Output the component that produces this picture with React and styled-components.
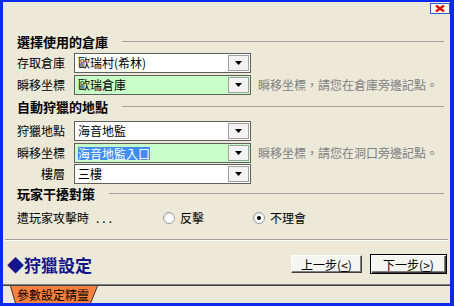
import React from "react";
import styled, { createGlobalStyle, css } from "styled-components";

const GlobalStyle = createGlobalStyle`
  html, body { margin: 0; padding: 0; }
  body {
    width: 454px; height: 306px; overflow: hidden; background: #ece9d8;
    font-family: "Noto Sans CJK TC", "Liberation Sans", sans-serif;
    font-size: 12px; color: #000;
  }
  * { box-sizing: border-box; }
`;

const Frame = styled.div`
  position: relative;
  width: 454px;
  height: 306px;
  border-style: solid;
  border-color: #0a2bea;
  border-width: 2px 4px 3px 3px;
  background: #ece9d8;
  display: flex;
  flex-direction: column;
`;

const CloseButton = styled.button`
  position: absolute;
  top: 1px;
  right: 0;
  width: 20px;
  height: 11px;
  padding: 0;
  border: 1px solid #3458d0;
  background: #fffcec;
  display: flex;
  align-items: center;
  justify-content: center;
`;

const Form = styled.div`
  padding: 33px 6px 0 14px;
  display: flex;
  flex-direction: column;
`;

const SectionHeader = styled.div`
  display: flex;
  align-items: center;
  gap: 14px;
  height: 13px;
  margin-top: ${(p) => p.$mt || 0}px;
  font-weight: bold;
  font-size: 13px;
  line-height: 13px;
  white-space: nowrap;
  &::after {
    content: "";
    flex: 1;
    height: 1px;
    background: #a0a0a0;
  }
`;

const Row = styled.div`
  display: flex;
  align-items: center;
  height: 20px;
  margin-top: ${(p) => p.$mt || 0}px;
  white-space: nowrap;
`;

const Label = styled.span`
  width: 48px;
  margin-right: 9px;
  text-align: right;
  line-height: 12px;
`;

const Combo = styled.div`
  display: flex;
  width: 177px;
  height: 20px;
  border: 1px solid #5f5f5f;
  padding: 1px;
  background: ${(p) => (p.$green ? "#c8ffc8" : "#ffffff")};
`;

const ComboText = styled.div`
  flex: 1;
  display: flex;
  align-items: center;
  padding-left: 2px;
  line-height: 12px;
`;

const Selected = styled.span`
  background: #3d8ef0;
  color: #fff;
  line-height: 13px;
`;

const ComboArrow = styled.div`
  width: 21px;
  height: 16px;
  border: 1px solid #a0a0a0;
  background: #f3f3f3;
  display: flex;
  align-items: center;
  justify-content: center;
`;

const Hint = styled.span`
  margin-left: 7px;
  color: #808080;
  line-height: 12px;
`;

const RadioRow = styled.div`
  display: flex;
  align-items: center;
  height: 13px;
  margin-top: 11px;
  white-space: nowrap;
`;

const Prompt = styled.span`
  width: 146px;
  line-height: 12px;
`;

const Dots = styled.span`
  margin-left: 7px;
  letter-spacing: 3px;
`;

const RadioOption = styled.label`
  display: flex;
  align-items: center;
  gap: 5px;
  width: ${(p) => p.$w}px;
  line-height: 12px;
`;

const RadioCircle = styled.span`
  width: 12px;
  height: 12px;
  border-radius: 50%;
  border: 1px solid #9c9c9c;
  background: radial-gradient(circle at 65% 65%, #ffffff 35%, #dcdcd4 100%);
  display: flex;
  align-items: center;
  justify-content: center;
  &::after {
    content: "";
    width: 4px;
    height: 4px;
    border-radius: 50%;
    background: ${(p) => (p.$checked ? "#000" : "transparent")};
  }
`;

const Divider = styled.div`
  margin: 15px 2px 0 2px;
  height: 2px;
  border-top: 1px solid #a0a0a0;
  border-bottom: 1px solid #ffffff;
`;

const Footer = styled.div`
  display: flex;
  align-items: center;
  height: 20px;
  margin-top: 13px;
  padding: 0 3px 0 4px;
`;

const Title = styled.div`
  flex: 1;
  font-size: 17px;
  line-height: 17px;
  font-weight: bold;
  color: #14148c;
  white-space: nowrap;
`;

const PushButton = styled.button`
  font: inherit;
  font-size: 12px;
  padding: 0;
  width: ${(p) => p.$w}px;
  height: 18px;
  margin-right: ${(p) => p.$mr || 0}px;
  background: #f5f5f2;
  color: #000;
  border: 1px solid;
  border-color: #ffffff #404040 #404040 #ffffff;
  box-shadow: inset -1px -1px 0 #808080;
  ${(p) =>
    p.$default &&
    css`
      height: 20px;
      border: 1px solid #000;
      box-shadow: inset 1px 1px 0 #fff, inset -1px -1px 0 #404040,
        inset -2px -2px 0 #808080;
    `}
`;

const TabStrip = styled.div`
  margin-top: auto;
  height: 19px;
  border-top: 1px solid #808080;
  box-shadow: inset 0 1px 0 #404040;
  padding: 1px 0 0 7px;
  display: flex;
`;

const Tab = styled.div`
  position: relative;
  width: 88px;
  height: 17px;
  display: flex;
  align-items: center;
  padding-left: 7px;
  white-space: nowrap;
`;

const TabShape = styled.svg`
  position: absolute;
  left: 0;
  top: 0;
`;

const TabLabel = styled.span`
  position: relative;
  line-height: 12px;
`;

const Arrow = () => (
  <svg width="7" height="4" viewBox="0 0 7 4">
    <polygon points="0,0 7,0 3.5,4" fill="#000" />
  </svg>
);

const ComboBox = ({ children, green }) => (
  <Combo $green={green}>
    <ComboText>{children}</ComboText>
    <ComboArrow>
      <Arrow />
    </ComboArrow>
  </Combo>
);

export default function App() {
  return (
    <>
      <GlobalStyle />
      <Frame>
        <CloseButton>
          <svg width="10" height="7" viewBox="0 0 10 7">
            <path d="M1 0.5 L9 6.5 M9 0.5 L1 6.5" stroke="#e00000" strokeWidth="2.2" />
          </svg>
        </CloseButton>
        <Form>
          <SectionHeader>選擇使用的倉庫</SectionHeader>
          <Row $mt={5}>
            <Label>存取倉庫</Label>
            <ComboBox>歐瑞村(希林)</ComboBox>
          </Row>
          <Row $mt={2}>
            <Label>瞬移坐標</Label>
            <ComboBox green>歐瑞倉庫</ComboBox>
            <Hint>瞬移坐標，請您在倉庫旁邊記點。</Hint>
          </Row>
          <SectionHeader $mt={5}>自動狩獵的地點</SectionHeader>
          <Row $mt={8}>
            <Label>狩獵地點</Label>
            <ComboBox>海音地監</ComboBox>
          </Row>
          <Row $mt={2}>
            <Label>瞬移坐標</Label>
            <ComboBox green>
              <Selected>海音地監入口</Selected>
            </ComboBox>
            <Hint>瞬移坐標，請您在洞口旁邊記點。</Hint>
          </Row>
          <Row $mt={1}>
            <Label>樓層</Label>
            <ComboBox>三樓</ComboBox>
          </Row>
          <SectionHeader $mt={3}>玩家干擾對策</SectionHeader>
          <RadioRow>
            <Prompt>
              遭玩家攻擊時<Dots>...</Dots>
            </Prompt>
            <RadioOption $w={90}>
              <RadioCircle />
              反擊
            </RadioOption>
            <RadioOption $w={60}>
              <RadioCircle $checked />
              不理會
            </RadioOption>
          </RadioRow>
        </Form>
        <Divider />
        <Footer>
          <Title>◆狩獵設定</Title>
          <PushButton $w={71} $mr={8}>
            上一步(<u>&lt;</u>)
          </PushButton>
          <PushButton $w={77} $default>
            下一步(<u>&gt;</u>)
          </PushButton>
        </Footer>
        <TabStrip>
          <Tab>
            <TabShape width="88" height="17" viewBox="0 0 88 17">
              <polygon points="0,0 88,0 81,17 5,17" fill="#f8813d" />
              <path d="M0.5 0 L5.5 17 M87.5 0 L80.5 17" stroke="#404040" strokeWidth="1" />
            </TabShape>
            <TabLabel>參數設定精靈</TabLabel>
          </Tab>
        </TabStrip>
      </Frame>
    </>
  );
}
